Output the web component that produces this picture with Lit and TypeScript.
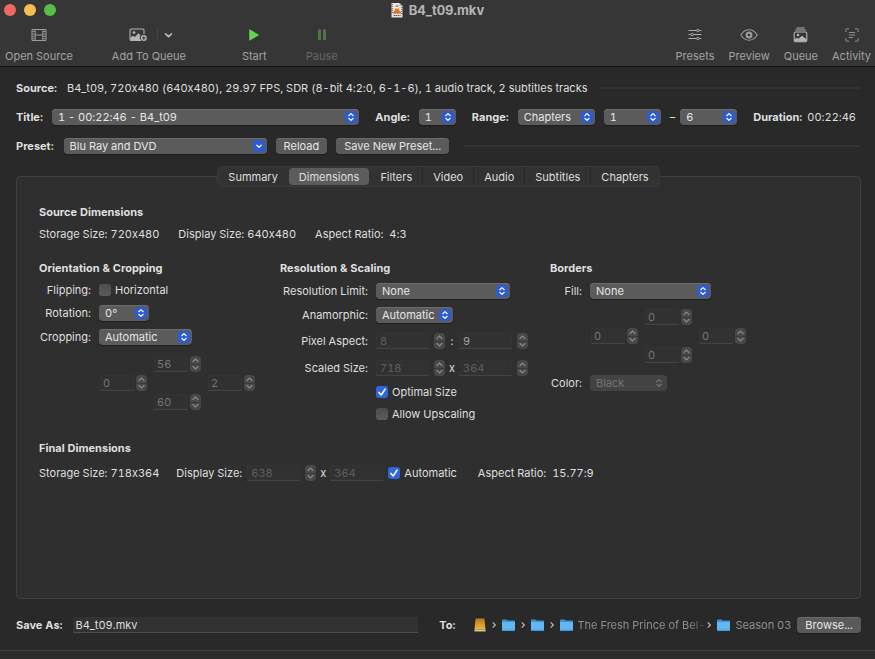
import { LitElement, html, css, svg, nothing } from "lit";
import { customElement } from "lit/decorators.js";
import { classMap } from "lit/directives/class-map.js";

const updown = html`<svg class="arrows" viewBox="0 0 12 12" aria-hidden="true">
  <path d="M3.8 4.7 6 2.6 8.2 4.7M3.8 7.3 6 9.4 8.2 7.3" />
</svg>`;
const down = html`<svg class="arrows" viewBox="0 0 12 12" aria-hidden="true">
  <path d="M3.8 5.2 6 7.3 8.2 5.2" />
</svg>`;

const popup = (id: string, width: string, value: string, opts: { label?: string; disabled?: boolean; combo?: boolean } = {}) => html`
  <span class=${classMap({ popup: true, [width]: true, off: !!opts.disabled })}>
    <select id=${id} aria-label=${opts.label ?? nothing} ?disabled=${opts.disabled}>
      <option>${value}</option>
    </select>
    <span class="cap">${opts.combo ? down : updown}</span>
  </span>
`;

const stepper = (name: string) => html`
  <span class="stepper">
    <button disabled aria-label="Increase ${name}"><svg viewBox="0 0 11 8"><path d="M3 5.5 5.5 3 8 5.5" /></svg></button>
    <button disabled aria-label="Decrease ${name}"><svg viewBox="0 0 11 8"><path d="M3 2.5 5.5 5 8 2.5" /></svg></button>
  </span>
`;

const edge = (side: string, value: string, name: string) => html`
  <span class="edge ${side}">
    <input class="num soft" disabled aria-label=${name} .value=${value} />${stepper(name)}
  </span>
`;

const tick = (label: string, checked = false) => html`
  <label class="tick"><input type="checkbox" .checked=${checked} />${label}</label>
`;

const folder = html`<svg class="folder" viewBox="0 0 13 12" aria-hidden="true">
  <path d="M0 1.2Q0 .4.8.4H4.4L5.6 1.5H12.2Q13 1.5 13 2.3V5H0Z" fill="#3b93d2" />
  <path d="M0 3H13V11Q13 11.8 12.2 11.8H.8Q0 11.8 0 11Z" fill="#62b6f2" />
  <path d="M0 10.6H13V11Q13 11.8 12.2 11.8H.8Q0 11.8 0 11Z" fill="#4a9fdd" />
</svg>`;
const drive = html`<svg class="drive" viewBox="0 0 12 14" aria-hidden="true">
  <defs><linearGradient id="g" x1="0" y1="0" x2="0" y2="1"><stop offset="0" stop-color="#b9791a" /><stop offset="1" stop-color="#f2b63a" /></linearGradient></defs>
  <path d="M1.600 .5H10.400L11.500 11.800H.5Z" fill="url(#g)" />
  <path d="M.4 11.8H11.6V13Q11.6 13.5 11 13.5H1Q.4 13.5.4 13Z" fill="#c9c2a4" />
</svg>`;
const sep = html`<svg class="sep" viewBox="0 0 4 8" aria-hidden="true"><path d="M.7 1.400 3.300 4 .7 6.600" /></svg>`;

const icons = {
  film: svg`<svg width="16" height="14" viewBox="0 0 16 14" fill="none" stroke="#9c9c9c">
    <path d="M1 1.500H15V12.500H1Z" /><path d="M4.200 1.500V12.500M11.800 1.500V12.500M4.200 7H11.800" />
    <path d="M2.600 3V11.500M13.400 3V11.500" stroke-dasharray="1 1.400" stroke-width="2.200" /></svg>`,
  addImage: svg`<svg width="19" height="14" viewBox="0 0 19 14">
    <path d="M12 12.5H2.2Q1 12.5 1 11.3V2.2Q1 1 2.2 1H13.8Q15 1 15 2.2V6" fill="none" stroke="#b4b4b4" stroke-width="1.1" />
    <circle cx="5" cy="4.6" r="1.4" fill="#b4b4b4" />
    <path d="M1.5 12V9.6L4 7.8 5.8 9 9.5 5.2 11.5 7.3Q10.3 8.6 10.8 10.6L11.8 12Z" fill="#b4b4b4" />
    <circle cx="14.8" cy="10" r="3" fill="#b4b4b4" /><path d="M14.8 8.2V11.8M13 10H16.600" stroke="#363636" /></svg>`,
  chevron: svg`<svg width="9" height="14" viewBox="0 0 9 14"><path d="M1.500 5.800 4.500 8.700 7.500 5.800" fill="none" stroke="#b8b8b8" stroke-width="1.600" stroke-linecap="round" /></svg>`,
  play: svg`<svg width="12" height="14" viewBox="0 0 12 14"><path d="M1.200 1.800V12.200Q1.300 12.700 1.800 12.400L10.800 7.300Q11.200 7 10.800 6.700L1.800 1.600Q1.300 1.300 1.200 1.800Z" fill="#63d354" /></svg>`,
  pause: svg`<svg width="10" height="14" viewBox="0 0 10 14"><path d="M1 1.500H4V12H1ZM6 1.500H9V12H6Z" fill="#4f7545" /></svg>`,
  sliders: svg`<svg width="14" height="14" viewBox="0 0 14 14" fill="none" stroke="#b0b0b0">
    <path d="M.5 2.500H8.200M11.300 2.500H13.500M.5 6.500H2.700M5.800 6.500H13.500M.5 10.500H8.200M11.300 10.500H13.500" />
    <circle cx="9.750" cy="2.500" r="1.200" /><circle cx="4.250" cy="6.500" r="1.200" /><circle cx="9.750" cy="10.500" r="1.200" /></svg>`,
  eye: svg`<svg width="18" height="14" viewBox="0 0 18 14" fill="none" stroke="#9c9c9c" stroke-width="1.100">
    <path d="M.8 7Q4.200 1.800 9 1.800T17.200 7Q13.800 12.200 9 12.200T.8 7Z" /><circle cx="9" cy="7" r="2.400" stroke-width="2.200" /></svg>`,
  queue: svg`<svg width="15" height="16" viewBox="0 0 15 16">
    <path d="M3.500 1H11.500M2.300 3H12.700" stroke="#b0b0b0" />
    <rect x="1.200" y="5" width="12.600" height="9.800" rx="1.200" fill="none" stroke="#b4b4b4" stroke-width="1.100" />
    <circle cx="5" cy="8" r="1.300" fill="#b4b4b4" /><path d="M1.500 14.500V12.300L4 10.700 5.500 11.700 9 8.700 13.500 12.300V14.500Z" fill="#b4b4b4" /></svg>`,
  activity: svg`<svg width="14" height="14" viewBox="0 0 14 14" fill="none" stroke="#929292">
    <path d="M.8 4V2Q.8.8 2 .8H4M10 .8H12Q13.200.8 13.200 2V4M13.200 10V12Q13.200 13.200 12 13.200H10M4 13.200H2Q.8 13.200.8 12V10" />
    <path d="M3.800 4.500H10.200M3.800 7H10.200M3.800 9.500H8" /></svg>`,
};

@customElement("app-root")
export class AppRoot extends LitElement {
  static styles = css`
    :host {
      display: flex;
      flex-direction: column;
      min-height: 100vh;
      background: #292929;
      color: #dfdfdf;
      font: 11px/16px Inter, "Liberation Sans", sans-serif;
      font-variant: no-contextual tabular-nums;
    }
    * { box-sizing: border-box; }
    button, input, select { font: inherit; font-variant: inherit; color: inherit; margin: 0; padding: 0; border: 0; background: none; }
    svg { display: block; flex: none; }
    b, h2 { font-weight: 700; }
    h1, h2, p { margin: 0; font-size: inherit; }

    .header { background: #363636; border-bottom: 1px solid #121212; height: 67px; }
    .titlebar { display: grid; grid-template-columns: 1fr auto 1fr; align-items: center; height: 20px; padding: 0 4px; }
    .lights { display: flex; gap: 8px; }
    .light { width: 12px; height: 12px; border-radius: 50%; }
    .red { background: #ec6a5e; }
    .yellow { background: #f4bf4f; }
    .green { background: #57c044; }
    .title { display: flex; align-items: center; gap: 6px; font-size: 13px; font-weight: 700; color: #b5b5b5; }
    .toolbar { display: flex; padding: 6px 4px 0 5px; color: #a2a2a2; }
    .tool { display: flex; flex-direction: column; align-items: center; gap: 4px; color: inherit; }
    .tool .pic { display: flex; align-items: center; justify-content: center; height: 18px; }
    .tool .menu { display: flex; align-items: center; padding-left: 5px; }
    .tool .bar { width: 1px; height: 14px; background: #444; margin: 0 6px 0 9px; }
    .tool:disabled { color: #666; }
    .start { display: flex; gap: 39px; }
    .start .tool:nth-child(3) { margin-left: 17px; }
    .end { display: flex; gap: 14px; margin-left: auto; }

    .form { display: flex; flex-direction: column; gap: 13px; padding: 13px 15px 0 16px; }
    .row { display: flex; align-items: center; gap: 9px; height: 16px; white-space: nowrap; }
    .group { display: flex; align-items: center; gap: 9px; }
    .titles { gap: 16px; padding-right: 4px; }
    .titles .grow { flex: 1; }
    .tight { gap: 5px; }
    .lead { gap: 10px; }
    .rule { flex: 1; height: 2px; background: #323232; margin-left: 5px; }

    .popup { display: inline-flex; position: relative; height: 16px; border-radius: 4px; background: #5a5b5a; box-shadow: inset 0 1px #6c6c6c, 0 1px 1px #1e1e1e; }
    .popup select { appearance: none; width: 100%; height: 16px; padding: 0 18px 0 6px; line-height: 16px; color: #e6e6e6; outline: 0; }
    .cap { position: absolute; right: 2px; top: 2px; width: 12px; height: 12px; border-radius: 3px; background: #2c5bd4; pointer-events: none; }
    .arrows { width: 12px; height: 12px; fill: none; stroke: #fff; stroke-width: 1.2; stroke-linecap: round; stroke-linejoin: round; }
    .off { background: #434343; box-shadow: none; }
    .off select { color: #737373; opacity: 1; }
    .off .cap { background: none; }
    .off .arrows { stroke: #777; }
    .fill { width: 100%; }
    .w37 { width: 37px; }
    .w50 { width: 50px; }
    .w57 { width: 57px; }
    .w77 { width: 77px; }
    .w93 { width: 93px; }
    .w121 { width: 121px; }
    .w134 { width: 134px; }
    .w203 { width: 203px; }
    .push { height: 16px; line-height: 16px; padding: 0 8px; border-radius: 4px; background: #5a5a5a; color: #e6e6e6; box-shadow: inset 0 1px #6a6a6a, 0 1px 1px #1e1e1e; }

    .panel { flex: 1; display: flex; flex-direction: column; margin: 22px 14px 0 16px; border: 1px solid #404040; border-radius: 4px; background: #2f2f2f; padding: 0 22px 18px; }
    .tabs { display: flex; gap: 1px; align-self: center; margin-top: -10px; height: 19px; background: #323232; border-radius: 5px; box-shadow: 0 0 0 1px #3a3a3a; }
    .tab { padding: 0 10px; line-height: 18px; border-radius: 4px; }
    .tab.on { background: #5c5c5c; height: 17px; margin-top: 1px; line-height: 16px; }
    .split { box-shadow: 1px 0 #292929; border-radius: 0; }
    .source { display: flex; flex-direction: column; gap: 6px; margin-top: 18px; }
    .facts { display: flex; gap: 19px; white-space: nowrap; }
    .columns { display: grid; grid-template-columns: 241px 270px 1fr; margin-top: 18px; white-space: nowrap; }
    .pair { display: grid; grid-template-columns: var(--label) 1fr; column-gap: 8px; align-items: center; height: 16px; margin-top: 7px; }
    .pair > :first-child { text-align: right; }
    .crop { --label: 52px; }
    .scale { --label: 88px; }
    .border { --label: 32px; }
    .m6 { margin-top: 6px; }
    .m8 { margin-top: 8px; }
    .m10 { margin-top: 10px; }
    .m11 { margin-top: 11px; }
    .m12 { margin-top: 12px; }
    .tick { display: flex; align-items: center; gap: 4px; }
    .tick input { appearance: none; width: 12px; height: 12px; border-radius: 3px; background: linear-gradient(#4c4c4c, #5c5c5c); }
    .tick input:checked { background: #2f66da url("data:image/svg+xml,%3Csvg xmlns='http://www.w3.org/2000/svg' viewBox='0 0 12 12'%3E%3Cpath d='M3 6.400 5.200 9 9.100 3.100' fill='none' stroke='white' stroke-width='1.600' stroke-linecap='round' stroke-linejoin='round'/%3E%3C/svg%3E"); }

    .num { width: 53px; height: 16px; padding: 0 4px; background: #313131; border-bottom: 1px solid #434343; box-shadow: inset 0 0 0 1px #343434; color: #5f5f5f; }
    .soft { width: 34px; padding: 0 3px; color: #757575; }
    .lit { color: #a2a2a2; }
    .stepper { display: flex; flex-direction: column; width: 11px; height: 16px; border-radius: 4px; background: #484848; overflow: hidden; }
    .stepper button { display: block; height: 8px; }
    .stepper button + button { box-shadow: inset 0 1px #3a3a3a; }
    .stepper path { fill: none; stroke: #8a8a8a; stroke-width: 1.2; stroke-linecap: round; }
    .cross { display: grid; grid-template-columns: repeat(3, 47px); gap: 3px 7px; margin: 11px 0 0 61px; }
    .border .cross { margin: 10px 0 0 41px; }
    .edge { display: flex; gap: 2px; }
    .top, .bottom { grid-column: 2; }
    .left { grid-column: 1; }
    .right { grid-column: 3; }
    .size { display: flex; align-items: center; gap: 5px; }
    .mid { width: 4px; display: flex; justify-content: center; }

    .final { margin-top: 18px; display: flex; flex-direction: column; gap: 9px; white-space: nowrap; }
    .final .row { gap: 5px; }
    .wide { margin-left: 12px; }
    .wider { margin-left: 16px; }

    .save { display: flex; align-items: center; height: 16px; margin: 18px 14px 17px 16px; white-space: nowrap; }
    .name { flex: 1; min-width: 80px; height: 16px; margin: 0 21px 0 10px; padding: 0 3px; background: #323232; border-bottom: 1px solid #4c4c4c; }
    .path { display: flex; align-items: center; gap: 6px; margin: 0 6px 0 18px; }
    .path a { display: flex; align-items: center; gap: 5px; color: #8e8e8e; text-decoration: none; }
    .fade { margin-right: -4px; mask-image: linear-gradient(to right, #000 88%, #0004); }
    .folder { width: 13px; height: 12px; }
    .drive { width: 12px; height: 14px; }
    .sep { width: 4px; height: 8px; fill: none; stroke: #b5b5b5; stroke-width: 1.2; }
    .status { height: 9px; border-top: 1px solid #414141; background: #2c2c2c; }
  `;

  private tool(label: string, icon: unknown, disabled = false) {
    return html`<button class="tool" ?disabled=${disabled}><span class="pic">${icon}</span>${label}</button>`;
  }

  render() {
    const tabs = ["Summary", "Dimensions", "Filters", "Video", "Audio", "Subtitles", "Chapters"];
    return html`
      <header class="header">
        <div class="titlebar">
          <div class="lights"><span class="light red"></span><span class="light yellow"></span><span class="light green"></span></div>
          <h1 class="title">
            <svg width="12" height="16" viewBox="0 0 12 16" aria-hidden="true">
              <path d="M.5 1H8.500L11.500 4V15.500H.5Z" fill="#e4e4e4" />
              <path d="M8.500 1V4H11.500Z" fill="#a9a9a9" />
              <path d="M1.200 2V12" stroke="#444" stroke-dasharray="1 1" />
              <path d="M10.800 5V12" stroke="#444" stroke-dasharray="1 1" />
              <path d="M5.300 3H6.700L9 10.500H3Z" fill="#e27a1e" />
              <path d="M4.800 5H7.200L7.700 6.600H4.300Z" fill="#fff" />
              <path d="M2.300 9.700H9.700L10 11.500H2Z" fill="#d96b12" />
              <path d="M2.500 13.500H9.500" stroke="#555" stroke-dasharray="1.500 .6" />
            </svg>
            B4_t09.mkv
          </h1>
        </div>
        <nav class="toolbar">
          <div class="start">
            ${this.tool("Open Source", icons.film)}
            ${this.tool("Add To Queue", html`<span class="menu">${icons.addImage}<span class="bar"></span>${icons.chevron}</span>`)}
            ${this.tool("Start", icons.play)}
            ${this.tool("Pause", icons.pause, true)}
          </div>
          <div class="end">
            ${this.tool("Presets", icons.sliders)} ${this.tool("Preview", icons.eye)}
            ${this.tool("Queue", icons.queue)} ${this.tool("Activity", icons.activity)}
          </div>
        </nav>
      </header>

      <section class="form">
        <div class="row lead">
          <b>Source:</b>
          <span>B4_t09, 720x480 (640x480), 29.97 FPS, SDR (8-bit 4:2:0, 6-1-6), 1 audio track, 2 subtitles tracks</span>
          <span class="rule"></span>
        </div>
        <div class="row titles">
          <div class="group grow"><label for="title"><b>Title:</b></label>${popup("title", "fill", "1 - 00:22:46 - B4_t09")}</div>
          <div class="group"><label for="angle"><b>Angle:</b></label>${popup("angle", "w37", "1")}</div>
          <div class="group">
            <label for="range"><b>Range:</b></label>${popup("range", "w77", "Chapters")}
            ${popup("from", "w57", "1", { label: "First chapter" })}
            <div class="group tight"><span>–</span>${popup("to", "w57", "6", { label: "Last chapter" })}</div>
          </div>
          <div class="group tight"><b>Duration:</b><span>00:22:46</span></div>
        </div>
        <div class="row">
          <div class="group lead"><label for="preset"><b>Preset:</b></label>${popup("preset", "w203", "Blu Ray and DVD", { combo: true })}</div>
          <button class="push">Reload</button>
          <button class="push">Save New Preset...</button>
          <span class="rule"></span>
        </div>
      </section>

      <main class="panel">
        <div class="tabs" role="tablist">
          ${tabs.map((t, i) => html`<button role="tab" aria-selected=${i === 1} class=${classMap({ tab: true, on: i === 1, split: i > 1 && i < 6 })}>${t}</button>`)}
        </div>

        <section class="source">
          <h2>Source Dimensions</h2>
          <div class="facts"><span>Storage Size: 720x480</span><span>Display Size: 640x480</span><span>Aspect Ratio:&nbsp; 4:3</span></div>
        </section>

        <div class="columns">
          <section class="crop">
            <h2>Orientation &amp; Cropping</h2>
            <div class="pair m6"><span>Flipping:</span>${tick("Horizontal")}</div>
            <div class="pair"><label for="rotation">Rotation:</label>${popup("rotation", "w50", "0°")}</div>
            <div class="pair m8"><label for="cropping">Cropping:</label>${popup("cropping", "w93", "Automatic")}</div>
            <div class="cross">
              ${edge("top", "56", "Crop top")} ${edge("left", "0", "Crop left")}
              ${edge("right", "2", "Crop right")} ${edge("bottom", "60", "Crop bottom")}
            </div>
          </section>

          <section class="scale">
            <h2>Resolution &amp; Scaling</h2>
            <div class="pair"><label for="limit">Resolution Limit:</label>${popup("limit", "w134", "None")}</div>
            <div class="pair m8"><label for="anamorphic">Anamorphic:</label>${popup("anamorphic", "w77", "Automatic")}</div>
            <div class="pair m10">
              <label for="par">Pixel Aspect:</label>
              <div class="size">
                <input id="par" class="num" disabled .value=${"8"} />${stepper("pixel aspect width")}<span class="mid">:</span>
                <input class="num lit" disabled aria-label="Pixel aspect height" .value=${"9"} />${stepper("pixel aspect height")}
              </div>
            </div>
            <div class="pair m11">
              <label for="sw">Scaled Size:</label>
              <div class="size">
                <input id="sw" class="num" disabled .value=${"718"} />${stepper("scaled width")}<span class="mid">x</span>
                <input class="num" disabled aria-label="Scaled height" .value=${"364"} />${stepper("scaled height")}
              </div>
            </div>
            <div class="pair m8"><span></span>${tick("Optimal Size", true)}</div>
            <div class="pair m6"><span></span>${tick("Allow Upscaling")}</div>
          </section>

          <section class="border">
            <h2>Borders</h2>
            <div class="pair"><label for="fill">Fill:</label>${popup("fill", "w121", "None")}</div>
            <div class="cross">
              ${edge("top", "0", "Border top")} ${edge("left", "0", "Border left")}
              ${edge("right", "0", "Border right")} ${edge("bottom", "0", "Border bottom")}
            </div>
            <div class="pair m12"><label for="color">Color:</label>${popup("color", "w77", "Black", { disabled: true })}</div>
          </section>
        </div>

        <section class="final">
          <h2>Final Dimensions</h2>
          <div class="row">
            <span>Storage Size: 718x364</span>
            <label class="wide" for="dw">Display Size:</label>
            <input id="dw" class="num" disabled .value=${"638"} />${stepper("display width")}<span class="mid">x</span>
            <input class="num" disabled aria-label="Display height" .value=${"364"} />
            ${tick("Automatic", true)}
            <span class="wider">Aspect Ratio:&nbsp; 15.77:9</span>
          </div>
        </section>
      </main>

      <footer class="save">
        <label for="name"><b>Save As:</b></label>
        <input id="name" class="name" .value=${"B4_t09.mkv"} />
        <b>To:</b>
        <nav class="path" aria-label="Destination">
          <a href="#" aria-label="Drive">${drive}</a>${sep}<a href="#" aria-label="Folder">${folder}</a>${sep}
          <a href="#" aria-label="Folder">${folder}</a>${sep}<a href="#">${folder}<span class="fade">The Fresh Prince of Bel-</span></a>${sep}
          <a href="#">${folder}Season 03</a>
        </nav>
        <button class="push">Browse...</button>
      </footer>
      <div class="status"></div>
    `;
  }
}
